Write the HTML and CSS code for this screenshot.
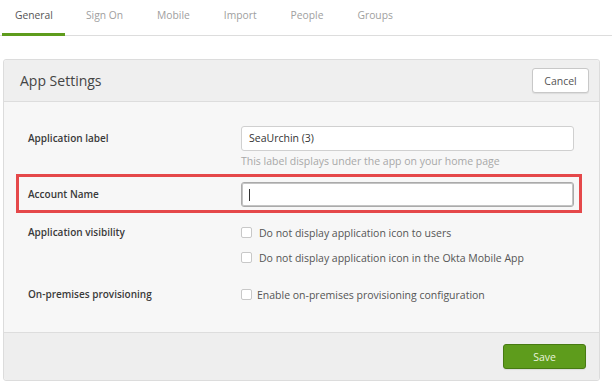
FILE: index.html
```html
<!DOCTYPE html>
<html lang="en">
<head>
    <meta charset="UTF-8">
    <meta name="viewport" content="width=device-width, initial-scale=1.0">
    <title>App Settings</title>
    <link rel="stylesheet" href="styles.css">
</head>
<body>

    <nav class="tabs">
        <a href="#" class="tab active">General</a>
        <a href="#" class="tab">Sign On</a>
        <a href="#" class="tab">Mobile</a>
        <a href="#" class="tab">Import</a>
        <a href="#" class="tab">People</a>
        <a href="#" class="tab">Groups</a>
    </nav>

    <section class="panel">
        <header class="panel-header">
            <h2>App Settings</h2>
            <button class="btn">Cancel</button>
        </header>

        <div class="panel-body">
            <div class="row">
                <div class="label">Application label</div>
                <div class="field">
                    <div class="input">SeaUrchin (3)</div>
                    <div class="hint">This label displays under the app on your home page</div>
                </div>
            </div>

            <div class="row highlight">
                <div class="label">Account Name</div>
                <div class="field">
                    <div class="input focused"><span class="caret"></span></div>
                </div>
            </div>

            <div class="row">
                <div class="label">Application visibility</div>
                <div class="field">
                    <label class="option"><span class="check"></span>Do not display application icon to users</label>
                    <label class="option"><span class="check"></span>Do not display application icon in the Okta Mobile App</label>
                </div>
            </div>

            <div class="row">
                <div class="label">On-premises provisioning</div>
                <div class="field">
                    <label class="option tight"><span class="check"></span>Enable on-premises provisioning configuration</label>
                </div>
            </div>
        </div>

        <footer class="panel-footer">
            <button class="btn btn-save">Save</button>
        </footer>
    </section>

</body>
</html>
```

FILE: styles.css
```css
body {
    margin: 0;
    background-color: #fff;
    font-family: "Open Sans", "Liberation Sans", sans-serif;
    font-size: 10.5px;
    color: #333;
}

/* Tabs */
.tabs {
    display: flex;
    gap: 8px;
    height: 35px;
    padding-left: 2px;
    border-bottom: 1px solid #ddd;
}

.tab {
    padding: 0 13px;
    font-size: 10.3px;
    line-height: 30px;
    color: #a0a0a0;
    text-decoration: none;
    border-bottom: 2px solid transparent;
    margin-bottom: -1px;
}

.tab.active {
    padding: 0 12px 0 13px;
    color: #555;
    border-bottom: 3px solid #5e9c1c;
}

/* Panel */
.panel {
    margin: 23px 0 0 3px;
    width: 595px;
    border: 1px solid #dcdcdc;
    border-radius: 3px;
    background-color: #f7f7f7;
}

.panel-header {
    display: flex;
    justify-content: space-between;
    align-items: center;
    height: 41px;
    padding: 0 10px 0 16px;
    background-color: #efefef;
    border-bottom: 1px solid #ddd;
    border-radius: 3px 3px 0 0;
}

.panel-header h2 {
    margin: 0;
    font-size: 14px;
    font-weight: normal;
    color: #444;
}

.btn {
    height: 25px;
    width: 57px;
    padding: 0;
    font-family: inherit;
    font-size: 10.5px;
    color: #555;
    background-color: #fff;
    border: 1px solid #c8c8c8;
    border-radius: 3px;
    box-shadow: 0 1px 1px rgba(0, 0, 0, 0.08);
}

/* Form rows */
.panel-body {
    padding: 16px 17px 20px 12px;
}

.row {
    display: grid;
    grid-template-columns: 213px 1fr;
    padding: 5px 5px 3px 9px;
    border: 3px solid transparent;
}

.row.highlight {
    border-color: #e5484a;
}

.label {
    font-size: 10px;
    font-weight: 600;
    line-height: 23px;
    color: #3a3a3a;
}

.row:first-child .label,
.row.highlight .label {
    line-height: 25px;
}

.input {
    height: 23px;
    line-height: 23px;
    padding: 0 7px;
    background-color: #fff;
    border: 1px solid #d0d0d0;
    border-radius: 3px;
    color: #333;
}

.input.focused {
    border: 1px solid #aaa;
    box-shadow: inset 0 0 0 1px #c4c4c4;
    display: flex;
    align-items: center;
}

.caret {
    width: 1px;
    height: 12px;
    background-color: #333;
}

.hint {
    margin-top: 3px;
    line-height: 14px;
    color: #a8a8a8;
}

.option {
    display: flex;
    align-items: center;
    gap: 7px;
    height: 23px;
    margin-bottom: 2px;
    color: #555;
}

.option:last-child {
    margin-bottom: 0;
}

.option.tight {
    gap: 5px;
}

.check {
    width: 9px;
    height: 9px;
    background-color: #fff;
    border: 1px solid #c8c8c8;
    border-radius: 2px;
}

/* Footer */
.panel-footer {
    display: flex;
    justify-content: flex-end;
    padding: 11px 13px 11px 0;
    background-color: #eee;
    border-top: 1px solid #ddd;
    border-radius: 0 0 3px 3px;
}

.btn-save {
    width: 83px;
    color: #e8f3dc;
    background-color: #5e9c1c;
    border-color: #477a12;
}
```
